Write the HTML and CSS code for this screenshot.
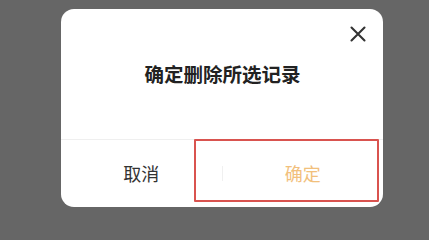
FILE: index.html
```html
<!DOCTYPE html>
<html lang="zh-CN">
<head>
<meta charset="utf-8">
<link rel="stylesheet" href="styles.css">
</head>
<body>
<div class="stage">
  <div class="dialog">
    <button class="close" aria-label="关闭">
      <svg width="16" height="16" viewBox="0 0 16 16"><path d="M1.5 1.5 L14.5 14.5 M14.5 1.5 L1.5 14.5" stroke="#333" stroke-width="2.1" stroke-linecap="round" fill="none"/></svg>
    </button>
    <div class="body">
      <div class="title">确定删除所选记录</div>
    </div>
    <div class="footer">
      <div class="btn cancel">取消</div>
      <div class="sep"></div>
      <div class="btn ok">确定</div>
    </div>
    <div class="highlight"></div>
  </div>
</div>
</body>
</html>
```
FILE: styles.css
```css
html, body {
  margin: 0;
  padding: 0;
  background: #666666;
  font-family: "Noto Sans CJK SC", "Noto Sans", sans-serif;
}
.stage {
  width: 429px;
  height: 216px;
  padding: 9px 0 0 61px;
  box-sizing: border-box;
}
.dialog {
  position: relative;
  width: 322px;
  height: 198px;
  background: #ffffff;
  border-radius: 13px;
  display: flex;
  flex-direction: column;
}
.close {
  position: absolute;
  top: 17px;
  right: 17px;
  width: 16px;
  height: 16px;
  padding: 0;
  border: 0;
  background: none;
  display: flex;
}
.body {
  height: 130px;
  display: flex;
  align-items: center;
  justify-content: center;
}
.title {
  font-size: 19.5px;
  font-weight: 700;
  color: #222;
  line-height: 1;
  margin-left: 1px;
}
.footer {
  flex: 1;
  border-top: 1px solid #efefef;
  display: flex;
  align-items: center;
}
.btn {
  flex: 1;
  text-align: center;
  font-size: 18px;
  line-height: 1;
  padding-bottom: 2px;
}
.cancel {
  color: #333;
}
.ok {
  color: #f2c07c;
}
.sep {
  width: 1px;
  height: 15px;
  background: #f0f0f0;
}
.highlight {
  position: absolute;
  left: 133px;
  top: 130px;
  width: 185px;
  height: 63px;
  border: 2px solid #d9534f;
  box-sizing: border-box;
  border-radius: 1px;
}
```
